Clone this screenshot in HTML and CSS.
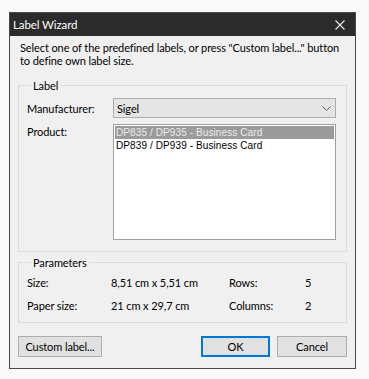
FILE: index.html
```html
<!DOCTYPE html>
<html>
<head>
<meta charset="utf-8">
<link rel="stylesheet" href="styles.css">
</head>
<body>
<div class="window">
  <div class="titlebar">
    <span class="title">Label Wizard</span>
    <svg class="close" width="10" height="10" viewBox="0 0 10 10"><path d="M0.5 0.5L9.5 9.5M9.5 0.5L0.5 9.5" stroke="#e6e6e6" stroke-width="1.2"/></svg>
  </div>
  <div class="content">
    <p class="intro">Select one of the predefined labels, or press "Custom label..." button<br>to define own label size.</p>
    <fieldset class="group label-group">
      <legend>Label</legend>
      <div class="row">
        <span class="field-label">Manufacturer:</span>
        <div class="combo">
          <span>Sigel</span>
          <svg width="9" height="5" viewBox="0 0 9 5"><path d="M0.5 0.5L4.5 4.5L8.5 0.5" fill="none" stroke="#606060" stroke-width="1"/></svg>
        </div>
      </div>
      <div class="row product-row">
        <span class="field-label">Product:</span>
        <div class="listbox">
          <div class="item selected">DP835 / DP935 - Business Card</div>
          <div class="item">DP839 / DP939 - Business Card</div>
        </div>
      </div>
    </fieldset>
    <fieldset class="group params">
      <legend>Parameters</legend>
      <div class="grid">
        <span>Size:</span><span>8,51 cm x 5,51 cm</span><span>Rows:</span><span>5</span>
        <span>Paper size:</span><span>21 cm x 29,7 cm</span><span>Columns:</span><span>2</span>
      </div>
    </fieldset>
    <div class="buttons">
      <button class="btn custom">Custom label...</button>
      <div class="spacer"></div>
      <button class="btn ok">OK</button>
      <button class="btn">Cancel</button>
    </div>
  </div>
</div>
</body>
</html>
```
FILE: styles.css
```css
html, body {
  margin: 0;
  padding: 0;
  background: #f9f9f9;
}
body {
  font-family: Lato, "Noto Sans", sans-serif;
  font-size: 11px;
  letter-spacing: -0.1px;
  color: #000;
}
.window {
  margin: 12px 0 0 9px;
  width: 347px;
  height: 357px;
  box-sizing: border-box;
  border: 1px solid #4a4a4a;
  background: #f0f0f0;
  display: flex;
  flex-direction: column;
}
.titlebar {
  height: 23px;
  background: #2b2b2b;
  display: flex;
  align-items: center;
  justify-content: space-between;
  padding: 0 10px 0 3px;
  color: #fff;
}
.title {
  line-height: 15px;
  font-size: 11.5px;
}
.close {
  display: block;
}
.content {
  flex: 1;
  display: flex;
  flex-direction: column;
  padding: 5px 8px 0 8px;
}
.intro {
  margin: 0 0 0 2px;
  line-height: 13px;
  height: 37px;
  white-space: nowrap;
}
.group {
  margin: 0;
  border: 1px solid #dcdcdc;
  padding: 0 10px 0 8px;
}
.group legend {
  padding: 0 2px;
  margin-left: 4px;
  line-height: 15px;
}
.label-group {
  padding-top: 5px;
  padding-bottom: 11px;
}
.row {
  display: flex;
  align-items: center;
}
.field-label {
  width: 86px;
  flex: none;
}
.combo {
  flex: 1;
  height: 20px;
  box-sizing: border-box;
  border: 1px solid #adadad;
  background: #e5e5e5;
  display: flex;
  align-items: center;
  justify-content: space-between;
  padding: 0 4px 0 3px;
}
.combo svg {
  display: block;
}
.product-row {
  margin-top: 6px;
  align-items: flex-start;
}
.product-row .field-label {
  margin-top: 1px;
}
.listbox {
  flex: 1;
  height: 116px;
  box-sizing: border-box;
  border: 1px solid #a0a0a0;
  background: #fff;
  padding: 1px;
  font-family: "Liberation Sans", sans-serif;
  font-size: 10px;
  letter-spacing: 0.1px;
}
.item {
  height: 13px;
  line-height: 13px;
  padding-left: 1px;
}
.item.selected {
  background: #9b9b9b;
  color: #ececec;
}
.params {
  margin-top: 3px;
  padding-top: 5px;
  padding-bottom: 9px;
}
.grid {
  display: grid;
  grid-template-columns: 84px 118px 76px 1fr;
  row-gap: 8px;
  line-height: 15px;
}
.buttons {
  display: flex;
  margin-top: 13px;
}
.spacer {
  flex: 1;
}
.btn {
  font-family: Lato, "Noto Sans", sans-serif;
  font-size: 11px;
  letter-spacing: -0.1px;
  height: 21px;
  box-sizing: border-box;
  border: 1px solid #adadad;
  background: #e1e1e1;
  color: #000;
  padding: 0;
  width: 70px;
  margin-left: 7px;
  white-space: nowrap;
}
.btn.custom {
  width: 84px;
  margin-left: 0;
}
.btn.ok {
  border: 2px solid #0078d7;
  width: 69px;
}
```
